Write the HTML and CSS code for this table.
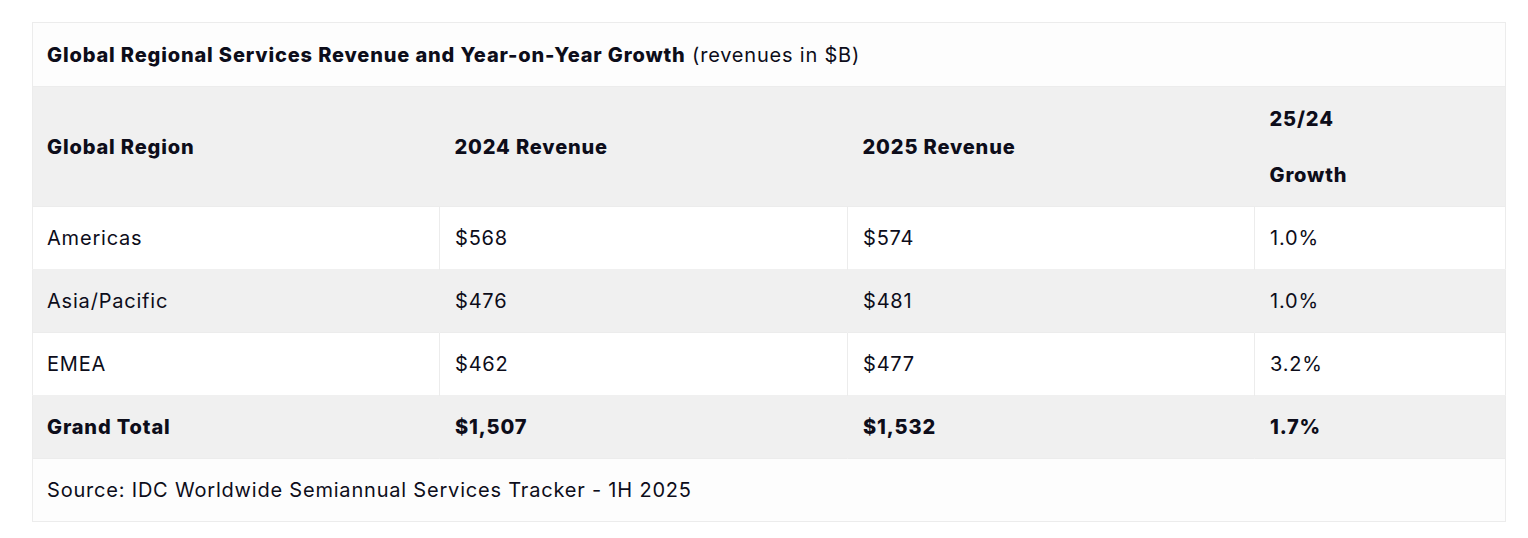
FILE: index.html
```html
<!DOCTYPE html>
<html lang="en">
<head>
<meta charset="utf-8">
<title>Global Regional Services Revenue</title>
<link rel="stylesheet" href="styles.css">
</head>
<body>
<div class="page">
  <table class="data-table">
    <caption class="table-caption"><strong>Global Regional Services Revenue and Year-on-Year Growth</strong> (revenues in $B)</caption>
    <colgroup>
      <col class="col-region">
      <col class="col-rev24">
      <col class="col-rev25">
      <col class="col-growth">
    </colgroup>
    <thead>
      <tr class="head-row">
        <th>Global Region</th>
        <th>2024 Revenue</th>
        <th>2025 Revenue</th>
        <th><p class="para">25/24</p><p class="para">Growth</p></th>
      </tr>
    </thead>
    <tbody>
      <tr class="row-light">
        <td>Americas</td><td>$568</td><td>$574</td><td>1.0%</td>
      </tr>
      <tr class="row-dark">
        <td>Asia/Pacific</td><td>$476</td><td>$481</td><td>1.0%</td>
      </tr>
      <tr class="row-light">
        <td>EMEA</td><td>$462</td><td>$477</td><td>3.2%</td>
      </tr>
      <tr class="row-dark row-total">
        <td>Grand Total</td><td>$1,507</td><td>$1,532</td><td>1.7%</td>
      </tr>
    </tbody>
    <tfoot>
      <tr class="row-source">
        <td colspan="4">Source: IDC Worldwide Semiannual Services Tracker - 1H 2025</td>
      </tr>
    </tfoot>
  </table>
</div>
</body>
</html>
```

FILE: styles.css
```css
html, body {
  margin: 0;
  padding: 0;
  background: #ffffff;
}

.page {
  padding: 22px 23px 0 32px;
  font-family: Inter, "Liberation Sans", sans-serif;
  color: #0d0d1a;
  font-size: 20px;
  line-height: 28px;
  letter-spacing: 0.8px;
}

.data-table {
  width: 1473px;
  border-collapse: collapse;
  table-layout: fixed;
  border: 1px solid #ececec;
}

.col-region { width: 407px; }
.col-rev24 { width: 408px; }
.col-rev25 { width: 407px; }
.col-growth { width: 251px; }

.table-caption {
  caption-side: top;
  text-align: left;
  background: #fdfdfd;
  border: 1px solid #ececec;
  border-bottom: none;
  padding: 18px 14px 17px 14px;
}

.table-caption strong,
.head-row th,
.row-total td {
  font-weight: 800;
  letter-spacing: 0.85px;
}

.head-row {
  background: #f0f0f0;
}

.head-row th {
  text-align: left;
  padding: 18px 15px 17px 15px;
  vertical-align: middle;
}

.para {
  margin: 0;
}

.para + .para {
  margin-top: 28px;
}

tbody td {
  padding: 17px 15px 17px 15px;
  border-left: 1px solid #ececec;
  border-top: 1px solid #ececec;
}

.head-row th:first-child,
tbody td:first-child,
.row-source td {
  padding-left: 14px;
}

tbody td:first-child {
  border-left: none;
}

.row-light {
  background: #ffffff;
}

.row-dark {
  background: #f0f0f0;
}

.row-dark td {
  border-left-color: #f0f0f0;
  border-top-color: #f0f0f0;
}

.row-source td {
  background: #fdfdfd;
  padding-top: 17px;
  padding-bottom: 17px;
  border-top: 1px solid #ececec;
}
```
